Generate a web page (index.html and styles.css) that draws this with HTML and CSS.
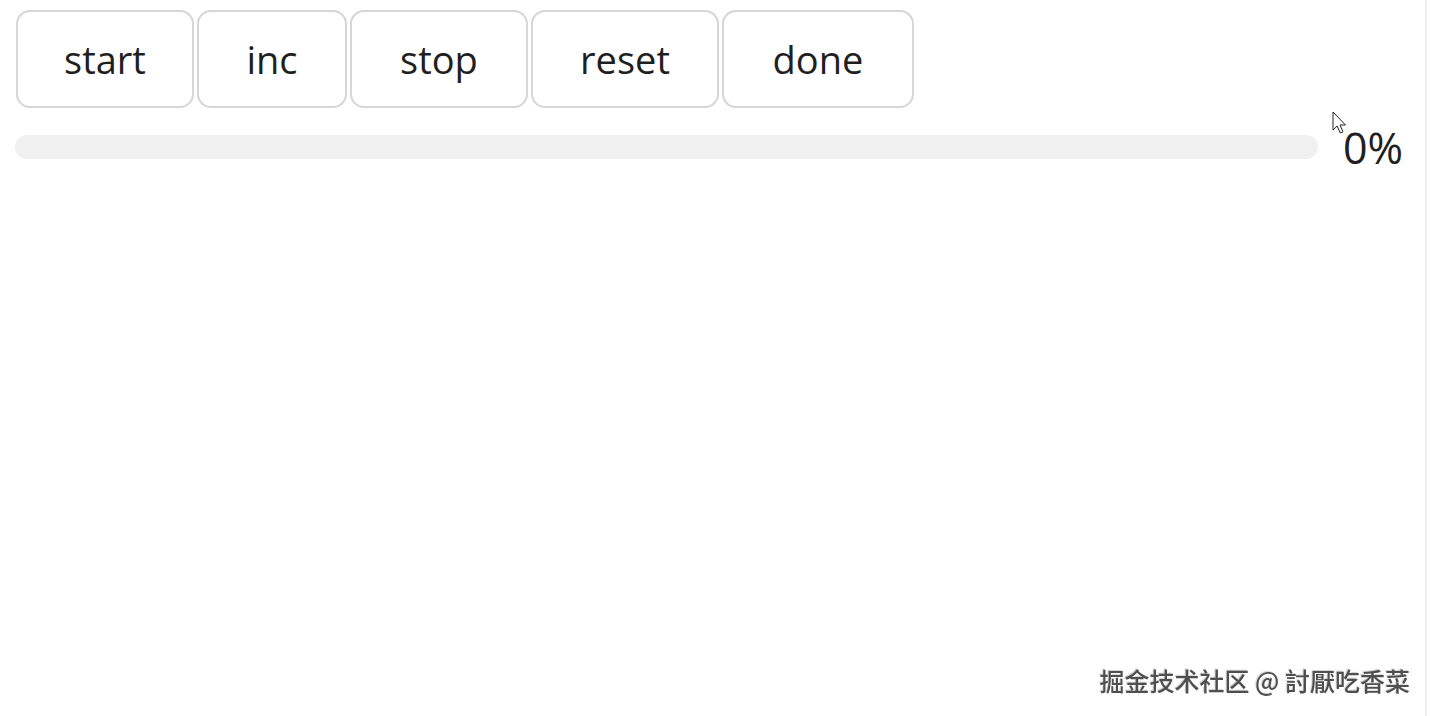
FILE: index.html
```html
<!DOCTYPE html>
<html lang="zh">
<head>
    <meta charset="UTF-8">
    <meta name="viewport" content="width=device-width, initial-scale=1.0">
    <title>Progress</title>
    <link rel="stylesheet" href="styles.css">
</head>
<body>
    <main class="page">
        <!-- Controls -->
        <div class="controls">
            <button class="btn">start</button>
            <button class="btn">inc</button>
            <button class="btn">stop</button>
            <button class="btn">reset</button>
            <button class="btn">done</button>
        </div>

        <!-- Progress -->
        <div class="progress-row">
            <div class="progress-track">
                <div class="progress-bar" style="width: 0%"></div>
            </div>
            <span class="progress-text">0%</span>
        </div>
    </main>

    <!-- mouse pointer captured in the shot -->
    <svg class="pointer" width="15" height="25" viewBox="0 0 15 25">
        <path d="M1 1 L1 19 L5.2 15 L8.3 22 L11 20.8 L8 14 L13.5 14 Z" fill="#fff" stroke="#222" stroke-width="1" stroke-linejoin="round"/>
    </svg>

    <div class="watermark">掘金技术社区 @ 討厭吃香菜</div>
</body>
</html>
```

FILE: styles.css
```css
html, body {
    height: 100%;
}
body {
    margin: 0;
    background-color: #fff;
    color: #1f1f1f;
    font-family: "Open Sans", "Noto Sans", sans-serif;
    border-right: 2px solid #eeeeee;
    box-sizing: border-box;
    width: 1427px;
}
.page {
    padding: 10px 15px 0 15px;
}
.controls {
    display: flex;
    gap: 3px;
    padding-left: 1px;
}
.btn {
    font-family: inherit;
    font-size: 38px;
    line-height: 52px;
    color: #1f1f1f;
    background-color: #fff;
    border: 2px solid #d6d6d6;
    border-radius: 14px;
    padding: 21px 0;
    cursor: pointer;
}
.btn:nth-child(1) { width: 178px; }
.btn:nth-child(2) { width: 150px; }
.btn:nth-child(3) { width: 178px; }
.btn:nth-child(4) { width: 188px; }
.btn:nth-child(5) { width: 192px; }
.progress-row {
    display: flex;
    align-items: center;
    margin-top: 13px;
}
.progress-track {
    flex: 1;
    height: 24px;
    border-radius: 12px;
    background-color: #f0f0f0;
    overflow: hidden;
}
.progress-bar {
    height: 100%;
    background-color: #4caf50;
}
.progress-text {
    font-size: 43px;
    line-height: 50px;
    margin-left: 25px;
    margin-top: 2px;
    width: 67px;
}
.pointer {
    position: absolute;
    left: 1332px;
    top: 111px;
}
.watermark {
    position: fixed;
    right: 20px;
    bottom: 18px;
    font-family: "Noto Sans CJK SC", sans-serif;
    font-size: 25px;
    font-weight: 500;
    color: #4f4f4f;
    text-shadow: 1px 1px 1px #fff, -1px -1px 1px #cfcfcf;
}
```
